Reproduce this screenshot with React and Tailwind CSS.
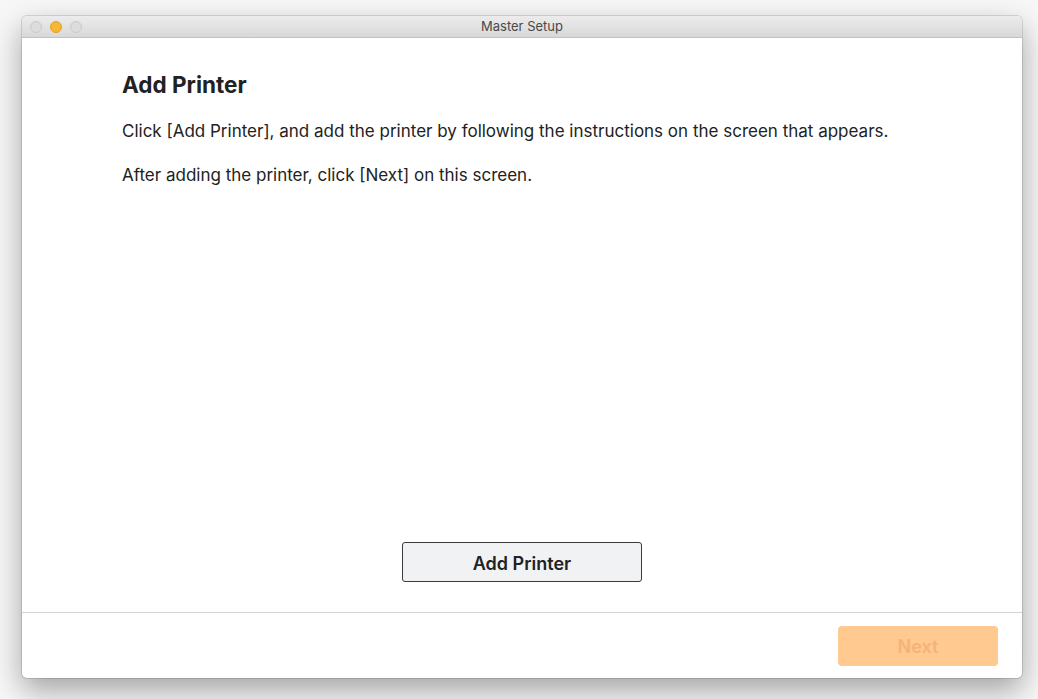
import React from 'react';

export default function App() {
  return (
    <div
      className="w-[1038px] h-[699px] bg-[#f7f7f7] overflow-hidden pt-[16px] pl-[22px]"
      style={{ fontFamily: 'Inter, "Noto Sans", sans-serif' }}
    >
      <div className="w-[1000px] h-[662px] bg-white rounded-[5px] flex flex-col overflow-hidden shadow-[0_12px_30px_rgba(0,0,0,0.35),0_0_0_1px_rgba(0,0,0,0.12)]">
        {/* title bar */}
        <div className="h-[22px] shrink-0 relative flex items-center bg-gradient-to-b from-[#ececec] to-[#d8d8d8] border-b border-[#c2c2c2]">
          <div className="flex items-center gap-[8px] pl-[8px]">
            <span className="w-[12px] h-[12px] rounded-full bg-[#dcdcdc] border border-[#c8c8c8]" />
            <span className="w-[12px] h-[12px] rounded-full bg-[#f6b830] border border-[#e0a125]" />
            <span className="w-[12px] h-[12px] rounded-full bg-[#dcdcdc] border border-[#c8c8c8]" />
          </div>
          <div className="absolute inset-0 flex items-center justify-center pt-[1px] text-[13px] text-[#4a4a4a]">
            Master Setup
          </div>
        </div>

        {/* content */}
        <div className="flex-1 flex flex-col px-[100px] pt-[33px]">
          <h1 className="text-[22.5px] font-bold text-[#222] leading-[28px]">Add Printer</h1>
          <p className="mt-[21px] text-[17px] text-[#222] leading-[22px]">
            Click [Add Printer], and add the printer by following the instructions on the screen that appears.
          </p>
          <p className="mt-[22px] text-[17px] text-[#222] leading-[22px]">
            After adding the printer, click [Next] on this screen.
          </p>
          <div className="flex-1" />
          <div className="flex justify-center pb-[30px]">
            <button className="w-[240px] h-[40px] pt-[2px] rounded-[3px] border border-[#3a3a3a] bg-[#f1f2f4] text-[18px] font-semibold text-[#222]">
              Add Printer
            </button>
          </div>
        </div>

        {/* footer */}
        <div className="h-[66px] shrink-0 border-t border-[#d2d2d2] flex items-center justify-end pr-[24px]">
          <button className="w-[160px] h-[40px] pt-[2px] rounded-[4px] bg-[#ffc98f] text-[18px] font-semibold text-[#f5b37a]">
            Next
          </button>
        </div>
      </div>
    </div>
  );
}
